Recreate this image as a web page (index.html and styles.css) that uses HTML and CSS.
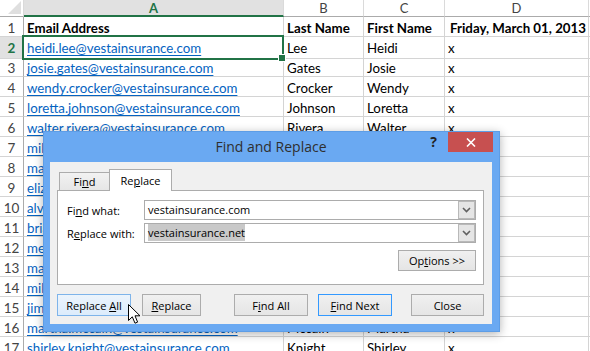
FILE: index.html
```html
<!DOCTYPE html>
<html lang="en">
<head>
  <meta charset="UTF-8">
  <title>Find and Replace</title>
  <link rel="stylesheet" href="styles.css">
</head>
<body>
  <div class="sheet">
    <div class="row heads">
      <div class="corner"></div>
      <div class="ch sel">A</div>
      <div class="ch">B</div>
      <div class="ch">C</div>
      <div class="ch">D</div>
      <div class="ch"></div>
    </div>
    <div class="row">
      <div class="rh">1</div>
      <div class="bold">Email Address</div>
      <div class="bold">Last Name</div>
      <div class="bold">First Name</div>
      <div class="bold date">Friday, March 01, 2013</div>
      <div></div>
    </div>
    <div class="row">
      <div class="rh sel">2</div>
      <div class="cur"><a href="#">heidi.lee@vestainsurance.com</a></div>
      <div>Lee</div><div>Heidi</div><div>x</div><div></div>
    </div>
    <div class="row">
      <div class="rh">3</div>
      <div><a href="#">josie.gates@vestainsurance.com</a></div>
      <div>Gates</div><div>Josie</div><div>x</div><div></div>
    </div>
    <div class="row">
      <div class="rh">4</div>
      <div><a href="#">wendy.crocker@vestainsurance.com</a></div>
      <div>Crocker</div><div>Wendy</div><div>x</div><div></div>
    </div>
    <div class="row">
      <div class="rh">5</div>
      <div><a href="#">loretta.johnson@vestainsurance.com</a></div>
      <div>Johnson</div><div>Loretta</div><div>x</div><div></div>
    </div>
    <div class="row">
      <div class="rh">6</div>
      <div><a href="#">walter.rivera@vestainsurance.com</a></div>
      <div>Rivera</div><div>Walter</div><div>x</div><div></div>
    </div>
    <div class="row">
      <div class="rh">7</div>
      <div><a href="#">mike.hunt@vestainsurance.com</a></div>
      <div>Hunt</div><div>Mike</div><div>x</div><div></div>
    </div>
    <div class="row">
      <div class="rh">8</div>
      <div><a href="#">mary.lawson@vestainsurance.com</a></div>
      <div>Lawson</div><div>Mary</div><div>x</div><div></div>
    </div>
    <div class="row">
      <div class="rh">9</div>
      <div><a href="#">elizabeth.ward@vestainsurance.com</a></div>
      <div>Ward</div><div>Elizabeth</div><div>x</div><div></div>
    </div>
    <div class="row">
      <div class="rh">10</div>
      <div><a href="#">alvin.perez@vestainsurance.com</a></div>
      <div>Perez</div><div>Alvin</div><div>x</div><div></div>
    </div>
    <div class="row">
      <div class="rh">11</div>
      <div><a href="#">brian.cole@vestainsurance.com</a></div>
      <div>Cole</div><div>Brian</div><div>x</div><div></div>
    </div>
    <div class="row">
      <div class="rh">12</div>
      <div><a href="#">melissa.grant@vestainsurance.com</a></div>
      <div>Grant</div><div>Melissa</div><div>x</div><div></div>
    </div>
    <div class="row">
      <div class="rh">13</div>
      <div><a href="#">mark.ellis@vestainsurance.com</a></div>
      <div>Ellis</div><div>Mark</div><div>x</div><div></div>
    </div>
    <div class="row">
      <div class="rh">14</div>
      <div><a href="#">mike.shaw@vestainsurance.com</a></div>
      <div>Shaw</div><div>Mike</div><div>x</div><div></div>
    </div>
    <div class="row">
      <div class="rh">15</div>
      <div><a href="#">jim.stone@vestainsurance.com</a></div>
      <div>Stone</div><div>Jim</div><div>x</div><div></div>
    </div>
    <div class="row">
      <div class="rh">16</div>
      <div><a href="#">martha.mccain@vestainsurance.com</a></div>
      <div>Mccain</div><div>Martha</div><div>x</div><div></div>
    </div>
    <div class="row">
      <div class="rh">17</div>
      <div><a href="#">shirley.knight@vestainsurance.com</a></div>
      <div>Knight</div><div>Shirley</div><div>x</div><div></div>
    </div>
  </div>

  <div class="dialog">
    <div class="titlebar">
      <span class="title">Find and Replace</span>
      <div class="tb-btns">
        <span class="help">?</span>
        <span class="close">
          <svg width="10" height="9" viewBox="0 0 10 9"><path d="M1 0.5 L9 8.5 M9 0.5 L1 8.5" stroke="#fff" stroke-width="1.6"/></svg>
        </span>
      </div>
    </div>
    <div class="body">
      <div class="tabs">
        <div class="tab">Fi<u>n</u>d</div>
        <div class="tab on">Re<u>p</u>lace</div>
      </div>
      <div class="panel">
        <div class="field">
          <label>Fi<u>n</u>d what:</label>
          <div class="combo">
            <span class="val">vestainsurance.com</span>
            <span class="drop"><svg width="9" height="6" viewBox="0 0 9 6"><path d="M1 1 L4.5 4.5 L8 1" fill="none" stroke="#606060" stroke-width="1.6"/></svg></span>
          </div>
        </div>
        <div class="field">
          <label>R<u>e</u>place with:</label>
          <div class="combo">
            <span class="val"><span class="hl">vestainsurance.net</span></span>
            <span class="drop"><svg width="9" height="6" viewBox="0 0 9 6"><path d="M1 1 L4.5 4.5 L8 1" fill="none" stroke="#606060" stroke-width="1.6"/></svg></span>
          </div>
        </div>
        <div class="opts">
          <button class="btn options">Op<u>t</u>ions &gt;&gt;</button>
        </div>
      </div>
      <div class="actions">
        <button class="btn wide hover">Replace <u>A</u>ll</button>
        <button class="btn narrow"><u>R</u>eplace</button>
        <button class="btn wide far">F<u>i</u>nd All</button>
        <button class="btn wide default"><u>F</u>ind Next</button>
        <button class="btn wide last">Close</button>
      </div>
    </div>
  </div>

  <svg class="cursor" width="13" height="21" viewBox="0 0 13 21">
    <path d="M0.5 0.5 L0.5 16.5 L4.3 12.8 L7 19.2 L9.6 18.1 L7 11.8 L12 11.8 Z" fill="#fff" stroke="#000" stroke-width="1" stroke-linejoin="miter"/>
  </svg>
</body>
</html>
```

FILE: styles.css
```css
* {
  box-sizing: border-box;
}
body {
  margin: 0;
  width: 590px;
  height: 351px;
  overflow: hidden;
  position: relative;
  background: #fff;
  font-family: Lato, "Liberation Sans", sans-serif;
  color: #000;
}
.sheet {
  width: 620px;
}
.row {
  display: grid;
  grid-template-columns: 24px 260px 80px 81px 144px 31px;
  height: 20px;
  font-size: 13.3px;
  line-height: 20px;
}
.row > div {
  border-right: 1px solid #d4d4d4;
  border-bottom: 1px solid #d4d4d4;
  padding: 1px 3px 0;
  white-space: nowrap;
  overflow: hidden;
}
.row.heads {
  height: 17px;
  line-height: 16px;
  font-size: 13px;
}
.row.heads > div {
  padding-top: 0;
  border-bottom-color: #ababab;
  border-right-color: #dadada;
}
.corner {
  position: relative;
}
.corner::after {
  content: "";
  position: absolute;
  right: 2px;
  bottom: 2px;
  border-left: 13px solid transparent;
  border-bottom: 13px solid #dfdfdf;
}
.ch {
  text-align: center;
  color: #444;
}
.ch.sel {
  background: #e1e1e1;
  color: #217346;
  font-weight: bold;
  border-bottom: 2px solid #217346 !important;
}
.rh {
  text-align: center;
  color: #444;
  font-size: 13.5px;
  padding: 1px 0 0 !important;
  border-right-color: #ababab !important;
}
.rh.sel {
  background: #e1e1e1;
  color: #217346;
  font-weight: bold;
}
.bold {
  font-weight: bold;
}
.date {
  text-align: right;
  padding-right: 2px !important;
}
.row a {
  color: #0563c1;
  text-decoration: underline;
  text-underline-offset: 2px;
}
.row > div.cur {
  position: relative;
  overflow: visible;
}
.cur::before {
  content: "";
  position: absolute;
  left: -2px;
  top: -2px;
  right: -1px;
  bottom: -2px;
  border: 2px solid #217346;
}
.cur::after {
  content: "";
  position: absolute;
  right: -3px;
  bottom: -4px;
  width: 6px;
  height: 6px;
  background: #217346;
  border: 1px solid #fff;
}

.dialog {
  position: absolute;
  left: 43px;
  top: 131px;
  width: 457px;
  height: 201px;
  display: flex;
  flex-direction: column;
  background: #6aa9f2;
  border: 1px solid #5d9de6;
  padding: 0 7px 7px 6px;
  box-shadow: 0 2px 9px rgba(0, 0, 0, 0.3);
  font-family: "Open Sans", sans-serif;
  font-size: 11px;
}
.titlebar {
  height: 30px;
  display: grid;
  grid-template-columns: 1fr auto 1fr;
}
.title {
  grid-column: 2;
  font-size: 14px;
  line-height: 30px;
  color: #2f2f2f;
}
.tb-btns {
  grid-column: 3;
  justify-self: end;
  display: flex;
  align-items: flex-start;
  margin-right: -1px;
}
.help {
  font-weight: bold;
  font-size: 14px;
  line-height: 20px;
  color: #222;
  margin-right: 11px;
}
.close {
  width: 45px;
  height: 20px;
  background: #c75050;
  display: flex;
  align-items: center;
  justify-content: center;
}
.body {
  flex: 1;
  background: #f0f0f0;
  padding: 7px 8px 0 7px;
}
.tabs {
  display: flex;
  align-items: flex-end;
  height: 22px;
  margin-bottom: -1px;
  padding-left: 2px;
  position: relative;
  z-index: 1;
}
.tab {
  width: 51px;
  height: 18px;
  margin-bottom: 1px;
  border: 1px solid #acacac;
  border-bottom: 0;
  background: linear-gradient(#f2f2f2, #e6e6e6);
  text-align: center;
  line-height: 17px;
}
.tab.on {
  width: 63px;
  height: 22px;
  margin-bottom: 0;
  margin-left: -1px;
  background: #fff;
  line-height: 21px;
}
.panel {
  height: 95px;
  background: #fff;
  border: 1px solid #acacac;
  padding: 9px 7px 0 9px;
}
.field {
  display: grid;
  grid-template-columns: 77px 332px;
  align-items: center;
  height: 20px;
  margin-bottom: 3px;
}
.combo {
  display: flex;
  height: 20px;
  border: 1px solid #acacac;
}
.val {
  flex: 1;
  padding-left: 3px;
  line-height: 18px;
}
.hl {
  background: #c9c9c9;
  padding: 1px 0;
}
.drop {
  width: 17px;
  background: #e5e5e5;
  border: 1px solid #b9b9b9;
  display: flex;
  align-items: center;
  justify-content: center;
}
.opts {
  display: flex;
  justify-content: flex-end;
  margin-top: 7px;
}
.btn {
  height: 22px;
  padding: 0;
  border: 1px solid #acacac;
  background: linear-gradient(#f0f0f0, #e5e5e5);
  font: inherit;
  color: #000;
}
.options {
  width: 78px;
  height: 21px;
}
.actions {
  display: flex;
  margin-top: 9px;
}
.wide {
  width: 74px;
}
.narrow {
  width: 59px;
  margin-left: 11px;
}
.far {
  margin-left: 33px;
}
.default {
  margin-left: 10px;
  border-color: #3399ff;
}
.last {
  margin-left: 19px;
  width: 73px;
}
.hover {
  border-color: #7eb4ea;
  background: linear-gradient(#ecf4fc, #dcecfc);
}
.cursor {
  position: absolute;
  left: 128px;
  top: 304px;
}
```
